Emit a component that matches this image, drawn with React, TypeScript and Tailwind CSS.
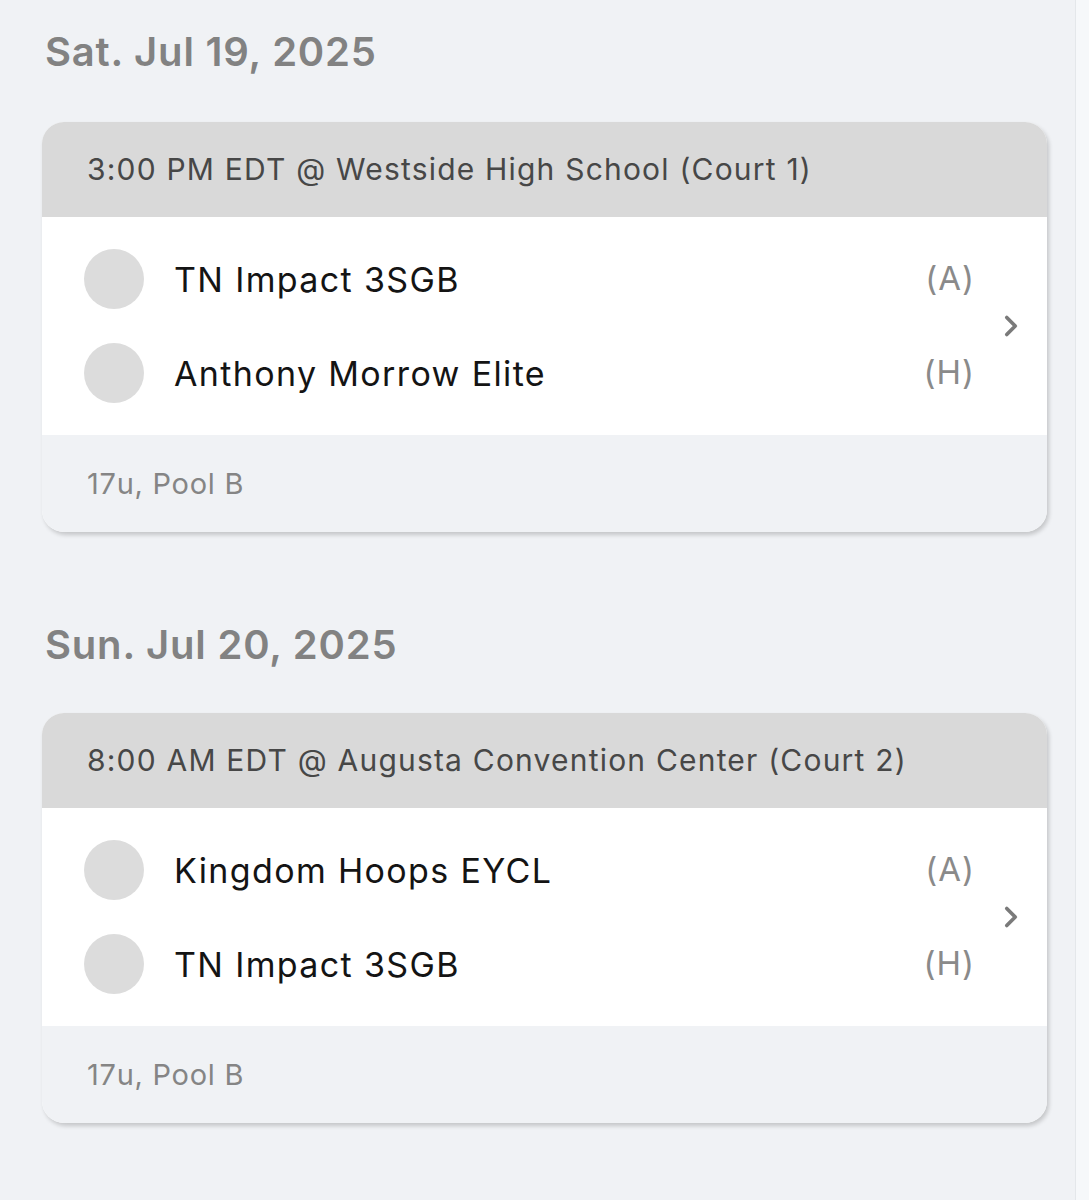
import { ChevronRight } from 'lucide-react'

type Game = {
  time: string
  venue: string
  away: string
  home: string
  division: string
}

const days: { date: string; games: Game[] }[] = [
  {
    date: 'Sat. Jul 19, 2025',
    games: [
      {
        time: '3:00 PM EDT',
        venue: 'Westside High School (Court 1)',
        away: 'TN Impact 3SGB',
        home: 'Anthony Morrow Elite',
        division: '17u, Pool B',
      },
    ],
  },
  {
    date: 'Sun. Jul 20, 2025',
    games: [
      {
        time: '8:00 AM EDT',
        venue: 'Augusta Convention Center (Court 2)',
        away: 'Kingdom Hoops EYCL',
        home: 'TN Impact 3SGB',
        division: '17u, Pool B',
      },
    ],
  },
]

function TeamRow({ name, side }: { name: string; side: string }) {
  return (
    <div className="flex h-[94px] items-center">
      <div className="h-[60px] w-[60px] shrink-0 rounded-full bg-[#dcdcdc]" />
      <span className="ml-[30px] flex-1 text-[34px] tracking-[0.04em] text-[#141414]">{name}</span>
      <span className="text-[33px] tracking-[0.03em] text-[#8a8a8a]">{side}</span>
    </div>
  )
}

function GameCard({ game }: { game: Game }) {
  return (
    <div className="overflow-hidden rounded-[22px] bg-white shadow-[2px_3px_4px_rgba(0,0,0,0.18)]">
      {/* header */}
      <div className="flex h-[95px] items-center bg-[#d9d9d9] px-[45px] text-[30px] tracking-[0.04em] text-[#474747]">
        {game.time} @ {game.venue}
      </div>

      {/* teams */}
      <div className="flex items-center bg-white py-[15px] pl-[42px]">
        <div className="flex-1">
          <TeamRow name={game.away} side="(A)" />
          <TeamRow name={game.home} side="(H)" />
        </div>
        <div className="flex w-[72px] justify-center">
          <ChevronRight size={34} strokeWidth={2.6} className="text-[#7a7a7a]" />
        </div>
      </div>

      {/* footer */}
      <div className="flex h-[97px] items-center bg-[#f0f2f5] px-[45px] text-[29px] tracking-[0.025em] text-[#858585]">
        {game.division}
      </div>
    </div>
  )
}

export default function App() {
  return (
    <div
      className="flex min-h-[1200px] bg-[#f0f2f5]"
      style={{ fontFamily: 'Inter, "Open Sans", sans-serif' }}
    >
      <div className="flex-1 pl-[42px] pr-[28px] pt-[28px]">
        {days.map((day, i) => (
          <div key={day.date} className={i > 0 ? 'mt-[89px]' : ''}>
            <h2 className="ml-[3px] text-[40px] leading-[48px] font-semibold tracking-[0.02em] text-[#828282]">
              {day.date}
            </h2>
            <div className={i > 0 ? 'mt-[44px]' : 'mt-[46px]'}>
              {day.games.map((g) => (
                <GameCard key={g.time} game={g} />
              ))}
            </div>
          </div>
        ))}
      </div>
      <div className="w-[14px] border-l border-[#e4e7ea] bg-[#f6f8fa]" />
    </div>
  )
}
